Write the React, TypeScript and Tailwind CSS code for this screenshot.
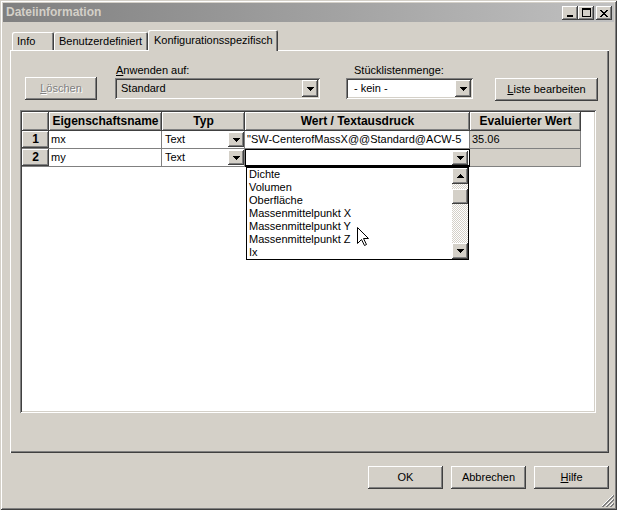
import React from "react";

const BTN =
  "shadow-[inset_-1px_-1px_0_#404040,inset_1px_1px_0_#ffffff,inset_-2px_-2px_0_#808080,inset_2px_2px_0_#d4d0c8]";
const SUNKEN =
  "shadow-[inset_1px_1px_0_#808080,inset_-1px_-1px_0_#ffffff,inset_2px_2px_0_#404040,inset_-2px_-2px_0_#d4d0c8]";

function DownArrow() {
  return (
    <svg width="7" height="4" viewBox="0 0 7 4" shapeRendering="crispEdges">
      <path d="M0 0h7v1H0zM1 1h5v1H1zM2 2h3v1H2zM3 3h1v1H3z" fill="#000" />
    </svg>
  );
}

function UpArrow() {
  return (
    <svg width="7" height="4" viewBox="0 0 7 4" shapeRendering="crispEdges">
      <path d="M3 0h1v1H3zM2 1h3v1H2zM1 2h5v1H1zM0 3h7v1H0z" fill="#000" />
    </svg>
  );
}

function TitleBtn({ children, extra }: { children: React.ReactNode; extra?: string }) {
  return (
    <div className={"w-[16px] h-[14px] bg-[#d4d0c8] flex items-center justify-center " + BTN + " " + (extra || "")}>
      {children}
    </div>
  );
}

function PushButton({ children, extra }: { children: React.ReactNode; extra?: string }) {
  return (
    <div className={"h-[23px] bg-[#d4d0c8] flex items-center justify-center " + BTN + " " + (extra || "")}>
      {children}
    </div>
  );
}

function HeaderCell({ w, children }: { w: string; children?: React.ReactNode }) {
  return (
    <div
      className={
        w +
        " h-[19px] shrink-0 bg-[#d4d0c8] flex items-center justify-center font-bold text-[12px] whitespace-nowrap " +
        BTN
      }
    >
      {children}
    </div>
  );
}

function RowHeader({ n }: { n: string }) {
  return (
    <div className="w-[27px] h-[18px] shrink-0 border-b border-[#808080]">
      <div className={"h-[17px] bg-[#d4d0c8] flex items-center justify-center font-bold text-[12px] " + BTN}>{n}</div>
    </div>
  );
}

function TypCell() {
  return (
    <div className="w-[83px] h-[18px] shrink-0 bg-white border-r border-b border-[#808080] flex items-center justify-between pl-[3px]">
      <span>Text</span>
      <div className={"w-[16px] h-[15px] bg-[#d4d0c8] flex items-center justify-center " + BTN}>
        <DownArrow />
      </div>
    </div>
  );
}

const ITEMS = [
  "Dichte",
  "Volumen",
  "Oberfläche",
  "Massenmittelpunkt X",
  "Massenmittelpunkt Y",
  "Massenmittelpunkt Z",
  "Ix",
];

export default function App() {
  return (
    <div className="relative w-[617px] h-[510px] overflow-hidden bg-[#d4d0c8] p-[3px] flex flex-col font-['Liberation_Sans',Arial,sans-serif] text-[11px] leading-[13px] text-black shadow-[inset_1px_1px_0_#d4d0c8,inset_-1px_-1px_0_#404040,inset_2px_2px_0_#ffffff,inset_-2px_-2px_0_#808080]">
      {/* Title bar */}
      <div className="h-[19px] shrink-0 flex items-start justify-between bg-linear-to-r from-[#808080] to-[#c0c0c0] pl-[3px] pr-[2px]">
        <div className="h-[19px] flex items-center font-bold text-[12px] text-[#d4d0c8]">Dateiinformation</div>
        <div className="flex mt-[3px]">
          <TitleBtn>
            <div className="w-[6px] h-[2px] bg-black mt-[6px] -ml-[1px]" />
          </TitleBtn>
          <TitleBtn>
            <div className="w-[9px] h-[9px] border border-black border-t-2 -mt-[1px]" />
          </TitleBtn>
          <TitleBtn extra="ml-[2px]">
            <svg width="8" height="7" viewBox="0 0 8 7" shapeRendering="crispEdges">
              <path
                d="M0 0h2v1H0zM6 0h2v1H6zM1 1h2v1H1zM5 1h2v1H5zM2 2h4v1H2zM3 3h2v1H3zM2 4h4v1H2zM1 5h2v1H1zM5 5h2v1H5zM0 6h2v1H0zM6 6h2v1H6z"
                fill="#000"
              />
            </svg>
          </TitleBtn>
        </div>
      </div>

      {/* Tabs */}
      <div className="mt-[8px] ml-[9px] h-[20px] shrink-0 flex items-end relative z-10">
        <div className="w-[42px] h-[18px] pl-[5px] flex items-center rounded-t-[2px] shadow-[inset_1px_1px_0_#ffffff,inset_-1px_0_0_#404040,inset_-2px_0_0_#808080]">
          Info
        </div>
        <div className="w-[94px] h-[18px] pl-[5px] flex items-center rounded-t-[2px] shadow-[inset_1px_1px_0_#ffffff,inset_-1px_0_0_#404040,inset_-2px_0_0_#808080]">
          Benutzerdefiniert
        </div>
        <div className="w-[130px] h-[21px] -mb-[1px] pl-[6px] pb-[1px] bg-[#d4d0c8] flex items-center rounded-t-[2px] shadow-[inset_1px_1px_0_#ffffff,inset_-1px_0_0_#404040,inset_-2px_0_0_#808080]">
          Konfigurationsspezifisch
        </div>
      </div>

      {/* Panel */}
      <div className="ml-[7px] w-[599px] h-[403px] shrink-0 flex flex-col shadow-[inset_1px_1px_0_#ffffff,inset_-1px_-1px_0_#404040,inset_-2px_-2px_0_#808080]">
        <div className="flex items-start">
          <PushButton extra="w-[72px] ml-[15px] mt-[27px] text-[#808080] [text-shadow:1px_1px_0_#ffffff]">
            <span>
              <span className="underline">L</span>öschen
            </span>
          </PushButton>
          <div className="ml-[18px] mt-[13px] flex flex-col">
            <div className="h-[14px] pl-[1px] flex items-center">
              <span>
                <span className="underline">A</span>nwenden auf:
              </span>
            </div>
            <div className={"mt-[1px] w-[205px] h-[21px] bg-[#d4d0c8] p-[2px] flex " + SUNKEN}>
              <div className="flex-1 flex items-center pl-[4px]">Standard</div>
              <div className={"w-[16px] h-[17px] bg-[#d4d0c8] flex items-center justify-center " + BTN}>
                <DownArrow />
              </div>
            </div>
          </div>
          <div className="ml-[26px] mt-[13px] flex flex-col">
            <div className="h-[14px] pl-[8px] flex items-center">Stücklistenmenge:</div>
            <div className={"mt-[1px] w-[127px] h-[21px] bg-white p-[2px] flex " + SUNKEN}>
              <div className="flex-1 flex items-center pl-[6px]">- kein -</div>
              <div className={"w-[16px] h-[17px] bg-[#d4d0c8] flex items-center justify-center " + BTN}>
                <DownArrow />
              </div>
            </div>
          </div>
          <PushButton extra="w-[103px] h-[22px] ml-[22px] mt-[28px]">
            <span>
              <span className="underline">L</span>iste bearbeiten
            </span>
          </PushButton>
        </div>

        {/* Grid */}
        <div className={"relative ml-[10px] mt-[9px] w-[576px] h-[303px] bg-white p-[2px] " + SUNKEN}>
          <div className="flex">
            <HeaderCell w="w-[27px]" />
            <HeaderCell w="w-[113px]">Eigenschaftsname</HeaderCell>
            <HeaderCell w="w-[83px]">Typ</HeaderCell>
            <HeaderCell w="w-[225px]">Wert / Textausdruck</HeaderCell>
            <HeaderCell w="w-[111px]">Evaluierter Wert</HeaderCell>
          </div>
          <div className="flex">
            <RowHeader n="1" />
            <div className="w-[113px] h-[18px] shrink-0 border-r border-b border-[#808080] flex items-center pl-[2px]">mx</div>
            <TypCell />
            <div className="w-[225px] h-[18px] shrink-0 border-r border-b border-[#808080] flex items-center pl-[2px] whitespace-nowrap overflow-hidden">
              "SW-CenterofMassX@@Standard@ACW-5
            </div>
            <div className="w-[111px] h-[18px] shrink-0 bg-[#d4d0c8] border-r border-b border-[#808080] flex items-center pl-[2px]">
              35.06
            </div>
          </div>
          <div className="flex">
            <RowHeader n="2" />
            <div className="w-[113px] h-[18px] shrink-0 border-r border-b border-[#808080] flex items-center pl-[2px]">my</div>
            <TypCell />
            <div className="w-[225px] h-[18px] shrink-0 bg-white border border-black border-b-2 flex items-center justify-end pr-[1px]">
              <div className={"w-[16px] h-[14px] bg-[#d4d0c8] flex items-center justify-center " + BTN}>
                <DownArrow />
              </div>
            </div>
            <div className="w-[111px] h-[18px] shrink-0 bg-[#d4d0c8] border-r border-b border-[#808080]" />
          </div>

          {/* Dropdown list */}
          <div className="absolute left-[226px] top-[57px] w-[223px] h-[93px] border border-black bg-white flex z-20">
            <div className="flex-1 flex flex-col pl-[2px]">
              {ITEMS.map((t) => (
                <div key={t} className="h-[13px] leading-[13px] whitespace-nowrap">
                  {t}
                </div>
              ))}
            </div>
            <div className="w-[16px] flex flex-col">
              <div className={"h-[16px] bg-[#d4d0c8] flex items-center justify-center " + BTN}>
                <UpArrow />
              </div>
              <div className="h-[5px] bg-[repeating-conic-gradient(#ffffff_0_25%,#d4d0c8_0_50%)] bg-[length:2px_2px]" />
              <div className={"h-[15px] bg-[#d4d0c8] " + BTN} />
              <div className="flex-1 bg-[repeating-conic-gradient(#ffffff_0_25%,#d4d0c8_0_50%)] bg-[length:2px_2px]" />
              <div className={"h-[16px] bg-[#d4d0c8] flex items-center justify-center " + BTN}>
                <DownArrow />
              </div>
            </div>
          </div>
        </div>
      </div>

      {/* Bottom buttons */}
      <div className="mt-[13px] flex justify-end gap-[8px] pr-[5px]">
        <PushButton extra="w-[75px]">OK</PushButton>
        <PushButton extra="w-[75px]">Abbrechen</PushButton>
        <PushButton extra="w-[75px]">
          <span>
            <span className="underline">H</span>ilfe
          </span>
        </PushButton>
      </div>

      {/* Resize grip */}
      <svg className="absolute right-[3px] bottom-[3px]" width="12" height="12" viewBox="0 0 12 12" shapeRendering="crispEdges">
        <path d="M11 0L0 11" stroke="#ffffff" />
        <path d="M12 0L0 12M12 1L1 12" stroke="#808080" />
        <path d="M11 4L4 11" stroke="#ffffff" />
        <path d="M12 4L4 12M12 5L5 12" stroke="#808080" />
        <path d="M11 8L8 11" stroke="#ffffff" />
        <path d="M12 8L8 12M12 9L9 12" stroke="#808080" />
      </svg>

      {/* Mouse cursor */}
      <svg className="absolute left-[357px] top-[227px] z-30" width="13" height="20" viewBox="0 0 13 20">
        <path d="M0.5 0.5L0.5 16.5L4.5 12.5L7.5 18.5L9.5 17.5L6.5 11.5L11.5 11.5Z" fill="#ffffff" stroke="#000000" strokeWidth="1" />
      </svg>
    </div>
  );
}
